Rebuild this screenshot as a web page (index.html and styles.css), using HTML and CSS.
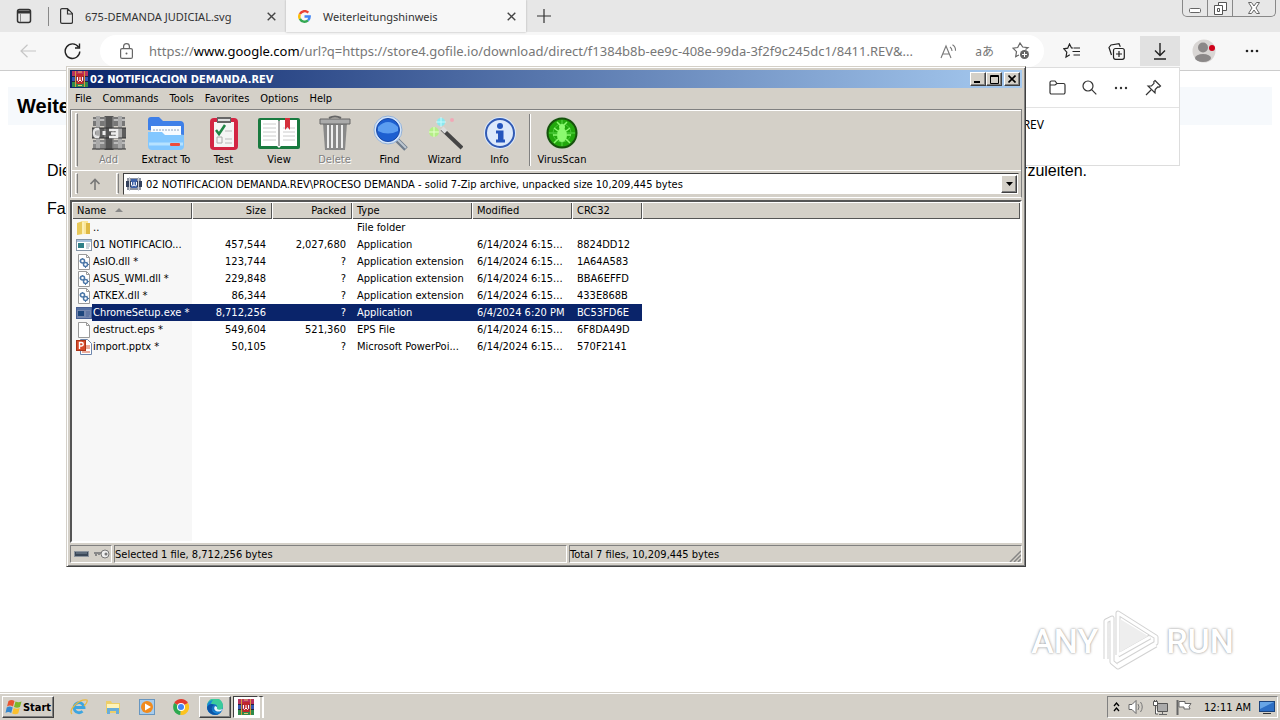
FILE: index.html
```
<!DOCTYPE html>
<html lang="de">
<head>
  <meta charset="UTF-8">
  <title>Weiterleitungshinweis</title>
  <link rel="stylesheet" href="styles.css">
</head>
<body>
  <svg class="defs" width="0" height="0">
    <symbol id="rar" viewBox="0 0 16 16">
      <rect width="16" height="5" fill="#b8315f"/>
      <rect y="5" width="16" height="6" fill="#3656b0"/>
      <rect y="11" width="16" height="5" fill="#2f8a4a"/>
      <path d="M0 5.500h16M0 10.500h16" stroke="#26233f"/>
      <path d="M3.500 0v16M12.500 0v16" stroke="#d8963c"/>
      <rect x="4.500" y="3" width="7" height="10" fill="#c0262c"/>
      <path d="M5.500 6v3.500l1 1 1.500-1.500 1.500 1.500 1-1V6M8 6v3" stroke="#fff" fill="none"/>
      <path d="M6 1h4M6 14.500h4" stroke="#e8c06a"/>
    </symbol>
    <symbol id="archive" viewBox="0 0 16 14">
      <path d="M1 1h14v12H1z" fill="#8d93a0"/>
      <path d="M0 4h16v6H0z" fill="#34415c"/>
      <path d="M3.500 0v14M12.500 0v14" stroke="#c9ced8"/>
      <path d="M5 2h6v9H5z" fill="#3e62a8"/>
      <path d="M5.500 5v3l1 1L8 8l1.500 1 1-1V5M8 5v3" stroke="#fff" fill="none"/>
    </symbol>
    <symbol id="exe" viewBox="0 0 16 14">
      <rect x=".5" y="1.500" width="15" height="11" fill="#fff" stroke="#8494a6"/>
      <path d="M1 2h14v2H1z" fill="#a9c2dc"/>
      <path d="M2 5h6v5H2z" fill="#2f7f87"/>
      <path d="M10 6h4M10 8h4M10 10h3" stroke="#9aa7b5"/>
    </symbol>
    <symbol id="exe-sel" viewBox="0 0 16 14">
      <rect x=".5" y="1.500" width="15" height="11" fill="#7486ae" stroke="#475f94"/>
      <path d="M1 2h14v2H1z" fill="#5470a4"/>
      <path d="M2 5h6v5H2z" fill="#1d467d"/>
      <path d="M10 6h4M10 8h4M10 10h3" stroke="#4e6699"/>
    </symbol>
    <symbol id="dll" viewBox="0 0 16 16">
      <path d="M2.500.5h8l3 3v12h-11z" fill="#fff" stroke="#9a9a9a"/>
      <path d="M10.500.5v3h3" fill="none" stroke="#9a9a9a"/>
      <circle cx="6.500" cy="7" r="2" fill="none" stroke="#4d78a8" stroke-width="1.500"/>
      <circle cx="9.500" cy="10.500" r="2" fill="none" stroke="#4d78a8" stroke-width="1.500"/>
      <path d="M6.500 4v1M3.500 7h1M9.500 13v1M12 10.500h1M4.500 5l1 1M11 8.500l.7-.7" stroke="#4d78a8"/>
    </symbol>
  </svg>

  <div class="tabs">
    <button class="tab-menu" aria-label="Tab actions"><svg width="16" height="16" viewBox="0 0 16 16"><rect x="1.500" y="1.500" width="13" height="13" rx="2" fill="none" stroke="#333" stroke-width="1.500"/><path d="M1 2.500h14v3H1z" fill="#333"/><path d="M4.500 5v9" stroke="#888"/></svg></button>
    <div class="tab">
      <svg width="13" height="16" viewBox="0 0 13 16"><path d="M2 .6h5.500l5 5V14a1.400 1.400 0 0 1-1.400 1.400H2A1.400 1.400 0 0 1 .6 14V2A1.400 1.400 0 0 1 2 .6zM7.500.6V6h5" fill="none" stroke="#333" stroke-width="1.200"/></svg>
      <a href="#">675-DEMANDA JUDICIAL.svg</a>
      <button class="close" aria-label="Close tab"><svg width="9" height="9" viewBox="0 0 9 9"><path d="M.7.7l7.600 7.600M8.300.7L.7 8.300" stroke="#444" stroke-width="1.400"/></svg></button>
    </div>
    <div class="tab active">
      <svg width="13" height="13" viewBox="0 0 24 24" fill="none" stroke-width="4.500"><path d="M19 5A9.600 9.600 0 0 0 3.500 7.500" stroke="#ea4335"/><path d="M3.500 7.500a9.600 9.600 0 0 0 0 9" stroke="#fbbc05"/><path d="M3.500 16.500A9.600 9.600 0 0 0 18.500 19" stroke="#34a853"/><path d="M18.500 19a9.600 9.600 0 0 0 3-7H12" stroke="#4285f4"/></svg>
      <a href="#">Weiterleitungshinweis</a>
      <button class="close" aria-label="Close tab"><svg width="9" height="9" viewBox="0 0 9 9"><path d="M.7.7l7.600 7.600M8.300.7L.7 8.300" stroke="#444" stroke-width="1.400"/></svg></button>
    </div>
    <button class="new-tab" aria-label="New tab"><svg width="14" height="14" viewBox="0 0 14 14"><path d="M7 0v14M0 7h14" stroke="#333" stroke-width="1.200"/></svg></button>
    <div class="win-controls">
      <button aria-label="Minimize"><svg width="12" height="12" viewBox="0 0 12 12"><rect x=".5" y="6.500" width="11" height="4" rx="1" fill="#fff" stroke="#666"/></svg></button>
      <button aria-label="Restore"><svg width="13" height="13" viewBox="0 0 13 13" fill="#fff" stroke="#555"><path d="M4.500.5h8v8h-8z"/><path d="M.5 3.500h8v9h-8zM3.500 6.500h2v3h-2z"/></svg></button>
      <button aria-label="Close"><svg width="12" height="12" viewBox="0 0 12 12"><path d="M.5.500h3L6 4 8.500.5h3L8 6l3.500 5.500h-3L6 8l-2.500 3.500h-3L4 6z" fill="#fff" stroke="#666"/></svg></button>
    </div>
  </div>

  <div class="toolbar">
    <button class="tool" aria-label="Back"><svg width="16" height="14" viewBox="0 0 16 14"><path d="M16 7H1M7.500.7L1 7l6.500 6.300" fill="none" stroke="#c6c6c6" stroke-width="1.200"/></svg></button>
    <button class="tool reload" aria-label="Refresh"><svg width="17" height="17" viewBox="0 0 17 17"><path d="M14.500 4A7.300 7.300 0 1 0 15.800 8.500M15.500.5v4.500h-4.500" fill="none" stroke="#222" stroke-width="1.400"/></svg></button>
    <div class="address">
      <svg width="13" height="16" viewBox="0 0 13 16"><rect x=".6" y="5.600" width="11.800" height="9.800" rx="1.500" fill="none" stroke="#666" stroke-width="1.200"/><path d="M3.600 5.500V3.500a2.900 2.900 0 0 1 5.800 0v2" fill="none" stroke="#666" stroke-width="1.200"/><circle cx="6.500" cy="10.500" r="1" fill="#666"/></svg>
      <a class="url" href="#">https://<b>www.google.com</b>/url?q=https://store4.gofile.io/download/direct/f1384b8b-ee9c-408e-99da-3f2f9c245dc1/8411.REV&amp;...</a>
      <button aria-label="Read aloud"><svg width="17" height="15" viewBox="0 0 17 15" fill="none" stroke="#777" stroke-width="1.100"><path d="M1 14L6 2l5 12M3 10h6M10 3q2 1.500 2 4M12.500.7q3.300 2 3 6"/></svg></button>
      <button class="translate" aria-label="Translate">aあ</button>
      <button aria-label="Add to favorites"><svg width="18" height="18" viewBox="0 0 18 18"><path d="M13.500 7.500l2.500-1.800-5.300-.7L8 1 5.700 5.500 1 6.200l3.500 3.400-.8 5L7 13" fill="none" stroke="#666" stroke-width="1.200"/><circle cx="12.500" cy="12.500" r="4.500" fill="#666"/><path d="M12.500 10v5M10 12.500h5" stroke="#fff"/></svg></button>
    </div>
    <button class="tool" aria-label="Favorites"><svg width="18" height="16" viewBox="0 0 18 16" fill="none" stroke="#222" stroke-width="1.200"><path d="M10.500 5L8.500 5 6.500 1 4.700 5.200.8 5.800l3 3.300-.8 4.900 3.800-2.200M11 5h6M9.500 8.500H17M10.500 12H17"/></svg></button>
    <button class="tool" aria-label="Collections"><svg width="17" height="17" viewBox="0 0 17 17" fill="none" stroke="#222" stroke-width="1.200"><path d="M3.500 12L1 4.500 3 2l8-1.300 1.300 3"/><rect x="5.500" y="5.500" width="10.800" height="10.800" rx="2"/><path d="M11 8v6M8 11h6"/></svg></button>
    <button class="tool pressed" aria-label="Downloads"><svg width="14" height="17" viewBox="0 0 14 17" fill="none" stroke="#222" stroke-width="1.400"><path d="M7 0v12M2 7.500l5 5 5-5M1 16h12"/></svg></button>
    <button class="tool" aria-label="Profile"><svg width="24" height="24" viewBox="0 0 24 24"><circle cx="12" cy="12" r="11.500" fill="#d9d6d4"/><circle cx="11" cy="8.500" r="5" fill="#8b8888"/><ellipse cx="11" cy="19" rx="8" ry="4" fill="#8b8888"/><circle cx="20" cy="9" r="3" fill="#d0021b"/></svg></button>
    <button class="tool more" aria-label="Settings"><svg width="14" height="4" viewBox="0 0 14 4" fill="#222"><circle cx="2" cy="2" r="1.300"/><circle cx="7" cy="2" r="1.300"/><circle cx="12" cy="2" r="1.300"/></svg></button>
  </div>

  <main class="page">
    <h1>Weite</h1>
    <p class="notice"><span>Die</span><span>weiterzuleiten.</span></p>
    <p>Falls</p>
  </main>

  <div class="downloads">
    <div class="downloads-head">
      <button aria-label="Open folder"><svg width="17" height="15" viewBox="0 0 17 15"><path d="M1 12V2.500A1.500 1.500 0 0 1 2.500 1H6l2 2.500h6.500A1.500 1.500 0 0 1 16 5v7.500a1.500 1.500 0 0 1-1.500 1.500h-12A1.500 1.500 0 0 1 1 12.500zM1 5h5l2-1.500" fill="none" stroke="#333" stroke-width="1.200"/></svg></button>
      <button aria-label="Search"><svg width="15" height="15" viewBox="0 0 15 15"><circle cx="6" cy="6" r="5" fill="none" stroke="#333" stroke-width="1.200"/><path d="M9.700 9.700l4.600 4.600" stroke="#333" stroke-width="1.200"/></svg></button>
      <button aria-label="More"><svg width="14" height="4" viewBox="0 0 14 4" fill="#333"><circle cx="2" cy="2" r="1.200"/><circle cx="7" cy="2" r="1.200"/><circle cx="12" cy="2" r="1.200"/></svg></button>
      <button aria-label="Pin"><svg width="17" height="17" viewBox="0 0 17 17"><path d="M10 1.500L15.500 7l-1.300 1.200-1.500-.2-2.500 2.500-.2 3.500L3 7l3.500-.2L9 4.300l-.2-1.600zM6 11l-5 5" fill="none" stroke="#333" stroke-width="1.200"/></svg></button>
    </div>
    <a class="download-name" href="#">8411.REV</a>
  </div>

  <div class="watermark" aria-hidden="true">
    <span>ANY</span>
    <svg width="60" height="64" viewBox="0 0 60 64" fill="none" stroke-linejoin="round">
      <path d="M4 50V12l6-3v44l6 5 38-22M16 46V4l38 24v6L16 56M16 46l32-18" stroke="#d2d2d2" stroke-width="5"/>
      <path d="M4 50V12l6-3v44l6 5 38-22M16 46V4l38 24v6L16 56M16 46l32-18" stroke="#fff" stroke-width="3"/>
      <path d="M18 10l28 17-28 16z" fill="#eee"/>
    </svg>
    <span>RUN</span>
  </div>

  <section class="winrar">
    <header class="titlebar">
      <svg width="16" height="16"><use href="#rar"/></svg>
      <h2>02 NOTIFICACION DEMANDA.REV</h2>
      <button aria-label="Minimize"><svg width="8" height="8" viewBox="0 0 8 8"><path d="M0 7h6" stroke="#000" stroke-width="2"/></svg></button>
      <button aria-label="Maximize"><svg width="9" height="9" viewBox="0 0 9 9"><path d="M.5.500h8v8h-8zM0 1.500h9" stroke="#000" fill="none"/></svg></button>
      <button class="close-win" aria-label="Close"><svg width="8" height="8" viewBox="0 0 8 8"><path d="M.5.500l7 7M7.500.5l-7 7" stroke="#000" stroke-width="1.600"/></svg></button>
    </header>
    <nav class="menu">
      <button>File</button>
      <button>Commands</button>
      <button>Tools</button>
      <button>Favorites</button>
      <button>Options</button>
      <button>Help</button>
    </nav>
    <div class="band actions">
      <i class="grip"></i>
      <button class="action" disabled>
        <svg width="36" height="36" viewBox="0 0 36 36"><path d="M2 2h32v9H2z" fill="#777"/><path d="M1 13h34v10H1z" fill="#5c5c5c"/><path d="M2 25h32v9H2z" fill="#888"/><path d="M2 5h32M2 28h32" stroke="#bbb" stroke-width="2"/><path d="M7 1v34M29 1v34" stroke="#aaa" stroke-width="4"/><path d="M18 1v34" stroke="#555" stroke-width="9"/><path d="M14 2v32M22 2v32" stroke="#999"/><path d="M1 13h34M1 23h34M1 34h34" stroke="#333"/><path d="M8 14H6q-3 0-3 4t3 4h2" stroke="#e4e4e4" stroke-width="2.500" fill="none"/><path d="M13 16v4" stroke="#eee" stroke-width="3"/><path d="M18 15h8v7h-8M20 18.500h5" stroke="#eee" stroke-width="2.500" fill="none"/></svg>
        Add
      </button>
      <button class="action wide">
        <svg width="38" height="36" viewBox="0 0 38 36"><path d="M1 15V5q0-3 3-3h8l4 4h17q4 0 4 4v10z" fill="#3d7fe8"/><path d="M4 11h30v15H4z" fill="#f7fbff"/><path d="M6 15h26" stroke="#c2cfdf" stroke-width="2" stroke-dasharray="2 1"/><path d="M1 17h14l3 3h19v11q0 4-4 4H5q-4 0-4-4z" fill="#82c7ff"/><path d="M2 29h34" stroke="#b6e2ff" stroke-width="3"/><rect x="23" y="28" width="10" height="3" rx="1" fill="#ee4b3a"/></svg>
        Extract To
      </button>
      <button class="action">
        <svg width="30" height="36" viewBox="0 0 30 36"><rect x="1" y="3" width="28" height="32" rx="4" fill="#d32543"/><path d="M5 7h20v25H5z" fill="#f5f5f5"/><path d="M8 2h14v6H8z" fill="#666"/><path d="M9 5h12" stroke="#ddd" stroke-width="2"/><path d="M7 15l3 4 6-9" stroke="#208546" stroke-width="2.500" fill="none"/><path d="M16 16h7M16 24h7M16 28h7" stroke="#bbb"/><path d="M8 22h5v6H8z" fill="none" stroke="#aaa"/></svg>
        Test
      </button>
      <button class="action book">
        <svg width="44" height="36" viewBox="0 0 44 36"><rect x="1" y="3" width="42" height="31" rx="2" fill="#197a3f"/><path d="M4 5h17l1 2 1-2h17v26H24l-2 2-2-2H4z" fill="#fff"/><path d="M22 6v25" stroke="#aaa" stroke-width="2"/><path d="M6 9h13M6 13h13M6 17h13M6 21h13M6 25h13M26 13h12M26 17h12M26 21h12M26 25h12" stroke="#ccc"/><path d="M28 3h5v12l-2.500-3-2.500 3z" fill="#d52f3b"/></svg>
        View
      </button>
      <button class="action" disabled>
        <svg width="32" height="36" viewBox="0 0 32 36"><path d="M4 8h24l-2 27H6z" fill="#898989"/><path d="M9 10v23M13 10v23M18 10v23M23 10v23" stroke="#eee" stroke-width="2"/><path d="M1 4h30v5H1z" fill="#ababab" stroke="#666"/><path d="M10 3q6-3 12 0" stroke="#666" stroke-width="2" fill="none"/></svg>
        Delete
      </button>
      <button class="action">
        <svg width="36" height="36" viewBox="0 0 36 36"><path d="M23 23l11 11" stroke="#6f7c8c" stroke-width="5"/><path d="M24 23l10 10" stroke="#bdc8d2" stroke-width="2"/><circle cx="16" cy="15" r="14" fill="#d4e5fa" stroke="#94b2d8"/><circle cx="16" cy="15" r="11.500" fill="#1d5fd0" stroke="#1947a4"/><path d="M6 12q10-10 20 0v4q-10 5-20 0z" fill="#5b9df0"/></svg>
        Find
      </button>
      <button class="action">
        <svg width="36" height="36" viewBox="0 0 36 36"><path d="M15 14l20 19" stroke="#454545" stroke-width="4"/><path d="M15 13l4 4" stroke="#ddd" stroke-width="4"/><circle cx="7" cy="17" r="5" fill="#b4ef87"/><path d="M7 12v10M2 17h10" stroke="#e8ffd0"/><circle cx="14" cy="7" r="4" fill="#8ae8ef"/><path d="M14 2v10M9 7h10" stroke="#c8fbff"/><circle cx="25" cy="5" r="2" fill="#f1a8b6"/></svg>
        Wizard
      </button>
      <button class="action">
        <svg width="36" height="36" viewBox="0 0 36 36"><circle cx="18" cy="18" r="16" fill="#dceafa"/><circle cx="18" cy="18" r="14" fill="#dce9fb" stroke="#315ab4" stroke-width="2"/><circle cx="18" cy="11" r="3" fill="#2455bd"/><path d="M14 17h6v9h3M14 26h9" stroke="#2455bd" stroke-width="3" fill="none"/><path d="M18.500 17v9" stroke="#2455bd" stroke-width="5"/></svg>
        Info
      </button>
      <i class="divider"></i>
      <button class="action wide">
        <svg width="36" height="36" viewBox="0 0 36 36"><circle cx="18" cy="18" r="16" fill="#c7d2c3"/><circle cx="18" cy="18" r="14.500" fill="#22a80d" stroke="#17510d" stroke-width="2"/><path d="M5 18h26M18 5v26" stroke="#5bd84a"/><circle cx="18" cy="18" r="9" fill="none" stroke="#48c838"/><ellipse cx="18" cy="20" rx="5" ry="7" fill="#8bf96f"/><circle cx="18" cy="12" r="3" fill="#8bf96f"/><path d="M14 16l-4-3M22 16l4-3M13 20H9M23 20h4M14 24l-4 4M22 24l4 4M16 10l-3-3M20 10l3-3" stroke="#8bf96f" stroke-width="1.500"/></svg>
        VirusScan
      </button>
    </div>
    <div class="band location">
      <i class="grip"></i>
      <button class="up" aria-label="Up one level"><svg width="12" height="12" viewBox="0 0 12 12"><path d="M6 12V2M1.500 6L6 1.500 10.500 6" fill="none" stroke="#777" stroke-width="1.600"/></svg></button>
      <i class="grip"></i>
      <div class="combo">
        <svg width="16" height="14"><use href="#archive"/></svg>
        <input type="text" aria-label="Archive path" value="02 NOTIFICACION DEMANDA.REV\PROCESO DEMANDA - solid 7-Zip archive, unpacked size 10,209,445 bytes">
        <button aria-label="Open list"><svg width="7" height="4" viewBox="0 0 7 4"><path d="M0 0h7L3.500 4z"/></svg></button>
      </div>
    </div>
    <div class="list">
      <table>
        <colgroup><col class="c-name"><col class="c-num"><col class="c-num"><col class="c-name"><col class="c-date"><col class="c-crc"><col></colgroup>
        <thead>
          <tr><th>Name <svg class="sort" width="8" height="4" viewBox="0 0 8 4"><path d="M0 4h8L4 0z" fill="#888"/></svg></th><th class="num">Size</th><th class="num">Packed</th><th>Type</th><th>Modified</th><th>CRC32</th><th></th></tr>
        </thead>
        <tbody>
          <tr><td class="name"><svg width="16" height="16" viewBox="0 0 16 16"><path d="M1 3l6-2v13l-6 1z" fill="#e8c95a"/><path d="M6 1h6v13H6z" fill="#fae69b"/><path d="M10 3h4v11h-4z" fill="#dfb944"/><path d="M7 2v12" stroke="#fff8cf"/></svg><span>..</span></td><td></td><td></td><td>File folder</td><td></td><td></td></tr>
          <tr><td class="name"><svg width="16" height="14"><use href="#exe"/></svg><span>01 NOTIFICACIO...</span></td><td class="num">457,544</td><td class="num">2,027,680</td><td>Application</td><td>6/14/2024 6:15...</td><td>8824DD12</td></tr>
          <tr><td class="name"><svg width="16" height="16"><use href="#dll"/></svg><span>AsIO.dll *</span></td><td class="num">123,744</td><td class="num">?</td><td>Application extension</td><td>6/14/2024 6:15...</td><td>1A64A583</td></tr>
          <tr><td class="name"><svg width="16" height="16"><use href="#dll"/></svg><span>ASUS_WMI.dll *</span></td><td class="num">229,848</td><td class="num">?</td><td>Application extension</td><td>6/14/2024 6:15...</td><td>BBA6EFFD</td></tr>
          <tr><td class="name"><svg width="16" height="16"><use href="#dll"/></svg><span>ATKEX.dll *</span></td><td class="num">86,344</td><td class="num">?</td><td>Application extension</td><td>6/14/2024 6:15...</td><td>433E868B</td></tr>
          <tr class="selected"><td class="name"><svg width="16" height="14"><use href="#exe-sel"/></svg><span>ChromeSetup.exe *</span></td><td class="num">8,712,256</td><td class="num">?</td><td>Application</td><td>6/4/2024 6:20 PM</td><td>BC53FD6E</td></tr>
          <tr><td class="name"><svg width="16" height="16" viewBox="0 0 16 16"><path d="M2.500.5h8l3 3v12h-11z" fill="#fff" stroke="#9a9a9a"/><path d="M10.500.5v3h3" fill="none" stroke="#9a9a9a"/></svg><span>destruct.eps *</span></td><td class="num">549,604</td><td class="num">521,360</td><td>EPS File</td><td>6/14/2024 6:15...</td><td>6F8DA49D</td></tr>
          <tr><td class="name"><svg width="16" height="16" viewBox="0 0 16 16"><path d="M4.500.5h7l4 4v11h-11z" fill="#fff" stroke="#6d86ad"/><path d="M10 7h4M10 9h4M6 13h8" stroke="#d85a3b"/><rect x=".5" y="1.500" width="9" height="10" fill="#d6492a" stroke="#a93318"/><path d="M3.500 10V3.500h2a1.700 1.700 0 0 1 0 3.500h-2" fill="none" stroke="#fff" stroke-width="1.400"/></svg><span>import.pptx *</span></td><td class="num">50,105</td><td class="num">?</td><td>Microsoft PowerPoi...</td><td>6/14/2024 6:15...</td><td>570F2141</td></tr>
        </tbody>
      </table>
    </div>
    <footer class="status">
      <div class="status-icons">
        <svg width="16" height="8" viewBox="0 0 16 8"><rect x=".5" y="1.500" width="14" height="5" fill="#3b4858" stroke="#8c949e"/><path d="M2 3h11" stroke="#7e8c9c"/></svg>
        <svg width="17" height="10" viewBox="0 0 17 10"><path d="M1 4h9M3 4v3M6 4v2" stroke="#888" stroke-width="2"/><circle cx="12" cy="5" r="4" fill="#eee" stroke="#777"/><circle cx="13" cy="5" r="1.500" fill="#777"/></svg>
      </div>
      <div class="status-cell">Selected 1 file, 8,712,256 bytes</div>
      <div class="status-cell total">Total 7 files, 10,209,445 bytes<svg width="12" height="12" viewBox="0 0 12 12"><path d="M1 12L12 1M5 12l7-7M9 12l3-3" stroke="#858585" stroke-width="1.500"/></svg></div>
    </footer>
  </section>

  <div class="taskbar">
    <button class="start"><svg width="18" height="16" viewBox="0 0 17 16"><path d="M3 2q3-2 6 0L7.500 7.500q-3-2-6 0z" fill="#e8542f"/><path d="M10 2.500q3 1.500 6 0L14.500 8q-3 1.500-6 0z" fill="#7db728"/><path d="M1.200 8.500q3-2 6 0L5.700 14q-3-2-5.700 0z" fill="#3588cf"/><path d="M8.200 9q3 1.500 6 0l-1.500 5.500q-3 1.500-6 0z" fill="#fbc02d"/></svg>Start</button>
    <button class="task" aria-label="Internet Explorer"><svg width="18" height="18" viewBox="0 0 18 18"><path d="M4 9.500h10a5 5 0 1 0-1.500 3.800" fill="none" stroke="#3da5e0" stroke-width="2.800"/><path d="M2 16Q-1 13 5 7T17 2q1 2-3 6" fill="none" stroke="#ebb93d" stroke-width="1.200"/></svg></button>
    <button class="task" aria-label="Explorer"><svg width="16" height="16" viewBox="0 0 16 16"><path d="M1 2h5l1 2h8v10H1z" fill="#edce69"/><path d="M2 5h12v5H2z" fill="#fff3b8"/><path d="M2 15V9h12v6h-3v-3H5v3z" fill="#69add9"/></svg></button>
    <button class="task" aria-label="Media Player"><svg width="16" height="16" viewBox="0 0 16 16"><rect x=".5" y=".5" width="15" height="15" fill="#a8ccec" stroke="#6796c0"/><circle cx="8" cy="8" r="6" fill="#f18b1e"/><path d="M6 4.500v7L12 8z" fill="#fff"/></svg></button>
    <button class="task" aria-label="Chrome"><svg width="16" height="16" viewBox="0 0 16 16"><path d="M8 8L1.200 4A8 8 0 0 1 15 4z" fill="#e33b2e"/><path d="M8 8L1.200 4A8 8 0 0 0 7.500 16z" fill="#2da94f"/><path d="M8 8l7-4a8 8 0 0 1-7.500 12z" fill="#fcc31e"/><circle cx="8" cy="8" r="4" fill="#fff"/><circle cx="8" cy="8" r="3" fill="#4285f4"/></svg></button>
    <button class="task open" aria-label="Edge"><svg width="17" height="16" viewBox="0 0 17 16"><circle cx="8" cy="8" r="8" fill="#1671c3"/><path d="M0 7A8 8 0 0 1 16 7q0 4-4 4-3 0-2-2 1-4-4-4-5 0-6 4z" fill="#3acb9b"/><path d="M0 8q0-6 6-7-3 3-2 7 1 6 10 5A8 8 0 0 1 0 8z" fill="#1887d8"/><path d="M0 8q3-5 7-2-4 2-1 7 3 3 7 1A8 8 0 0 1 0 8z" fill="#0c54a5"/><path d="M8 7q-2 3 1 5 2 1 5 0l2-2q-7 2-6-2z" fill="#e7f8ff"/></svg></button>
    <button class="task current" aria-label="WinRAR"><svg width="16" height="16"><use href="#rar"/></svg></button>
    <i class="stack"></i>
    <div class="tray">
      <svg width="7" height="10" viewBox="0 0 7 10"><path d="M1 4l2.500-3L6 4M1 9l2.500-3L6 9" fill="none" stroke="#000" stroke-width="1.300"/></svg>
      <svg width="16" height="14" viewBox="0 0 16 14"><path d="M1 4.500h3l4-4v13l-4-4H1z" fill="#fff" stroke="#666"/><path d="M10 4q2 3 0 6M12.500 2q3.500 5 0 10" fill="none" stroke="#777"/></svg>
      <svg width="16" height="15" viewBox="0 0 16 15"><path d="M5.500 3.500h10v8h-10z" fill="#aaa" stroke="#555"/><path d="M7 14.500h8M10.500 12v2" stroke="#666"/><path d="M1.500 1.500h4v4h-4zM3.500 6v8H6M2.500 0v2M4.500 0v2" fill="#fff" stroke="#555"/></svg>
      <svg width="16" height="15" viewBox="0 0 16 15"><path d="M1.500 0v15" stroke="#666" stroke-width="2"/><path d="M3 1.500h6v2h6l-2 3 1 2.500H8V7H3z" fill="#fff" stroke="#666"/></svg>
      <time>12:11 AM</time>
      <svg width="16" height="13" viewBox="0 0 16 13"><rect x=".5" y=".5" width="15" height="10" fill="#2d6fc5" stroke="#1b437c"/><path d="M1 1h14L1 8z" fill="#67a5e6"/><path d="M4 12.500h8" stroke="#333"/></svg>
    </div>
  </div>
</body>
</html>
```
FILE: styles.css
```
* {
  box-sizing: border-box;
}
body {
  margin: 0;
  height: 100vh;
  overflow: hidden;
  display: flex;
  flex-direction: column;
  background: #fff;
  color: #000;
  font: 11px/17px "DejaVu Sans Condensed", Tahoma, sans-serif;
}
button {
  border: 0;
  padding: 0;
  background: none;
  color: inherit;
  font: inherit;
  display: flex;
  align-items: center;
  justify-content: center;
}
svg {
  flex: none;
  display: block;
}
a {
  color: inherit;
  text-decoration: none;
}
.defs {
  position: absolute;
}

/* browser */
.tabs,
.toolbar {
  display: flex;
  flex: none;
  font-family: "Noto Sans", "Noto Sans CJK JP", sans-serif;
}
.tabs {
  height: 32px;
  background: #e7e7e7;
  font-size: 11px;
  color: #333;
}
.tab-menu {
  width: 48px;
}
.tab {
  width: 238px;
  display: flex;
  align-items: center;
  gap: 12px;
  padding: 0 10px 0 12px;
  position: relative;
}
.tab:not(.active)::before {
  content: "";
  position: absolute;
  left: 0;
  top: 7px;
  height: 19px;
  border-left: 1px solid #888;
}
.tab.active {
  width: 240px;
  background: #f7f7f7;
  box-shadow: 0 0 2px #aaa;
}
.tab a {
  flex: 1;
}
.new-tab {
  width: 36px;
}
.win-controls {
  display: flex;
  height: 17px;
  margin: 0 4px 0 auto;
  border: 1px solid #888;
  border-top: 0;
  border-radius: 0 0 5px 5px;
}
.win-controls button {
  width: 25px;
  border-right: 1px solid #888;
}
.win-controls button:last-child {
  width: 42px;
  border: 0;
}
.toolbar {
  height: 39px;
  align-items: center;
  background: #f7f7f7;
  border-bottom: 1px solid #ccc;
  padding: 0 8px;
}
.tool {
  width: 40px;
  height: 30px;
  margin-right: 4px;
}
.toolbar .reload {
  margin-right: 8px;
}
.tool.pressed {
  background: #e1e1e1;
}
.toolbar .more {
  width: 40px;
  margin: 0 0 0 4px;
}
.address {
  flex: 1;
  min-width: 0;
  height: 32px;
  display: flex;
  align-items: center;
  gap: 18px;
  padding: 0 14px 0 20px;
  margin-right: 8px;
  border-radius: 16px;
  background: #fff;
  color: #777;
}
.url {
  flex: 1;
  min-width: 0;
  margin-left: -2px;
  overflow: hidden;
  white-space: nowrap;
  font-size: 13px;
}
.url b {
  font-weight: 400;
  color: #000;
}
.translate {
  font-size: 12px;
}

/* redirect notice */
.page {
  flex: 1;
  padding: 16px 8px;
  font: 16px/18px "Liberation Sans", Arial, sans-serif;
}
.page h1 {
  margin: 0 0 37px;
  padding: 0 9px;
  background: #f6f9fc;
  font-size: 20px;
  line-height: 38px;
}
.page p {
  margin: 0 39px 20px;
}
.page .notice {
  display: flex;
  justify-content: space-between;
  margin-right: 185px;
}
.downloads {
  position: absolute;
  top: 67px;
  right: 100px;
  width: 360px;
  height: 99px;
  background: #fff;
  border: 1px solid #ddd;
}
.downloads-head {
  height: 40px;
  display: flex;
  justify-content: flex-end;
  align-items: center;
  padding-right: 10px;
  border-bottom: 1px solid #e3e3e3;
}
.downloads-head button {
  width: 32px;
}
.download-name {
  display: block;
  padding: 8px 135px 0 0;
  text-align: right;
  font: 12px/17px "Noto Sans", sans-serif;
}
.watermark {
  position: absolute;
  right: 46px;
  bottom: 47px;
  display: flex;
  align-items: center;
  gap: 4px;
  color: #fff;
  font: 500 34px/64px Roboto, sans-serif;
  text-shadow: 0 0 3px #999, 0 0 1px #bbb;
}

/* archive window */
.winrar {
  position: absolute;
  left: 66px;
  top: 66px;
  width: 75vw;
  height: 501px;
  display: flex;
  flex-direction: column;
  padding: 3px;
  background: #d4d0c8;
  border: 1px solid #d4d0c8;
  border-right-color: #404040;
  border-bottom-color: #404040;
  box-shadow: inset 1px 1px #fff, inset -1px -1px #808080;
}
.titlebar {
  height: 18px;
  flex: none;
  display: flex;
  align-items: center;
  padding: 0 2px;
  background: linear-gradient(90deg, #0a246a, #a6caf0);
  color: #fff;
}
.titlebar h2 {
  flex: 1;
  margin: 0 0 0 2px;
  font-size: 11px;
}
.titlebar button,
.combo button,
.start,
.task.open {
  background: #d4d0c8;
  border: 1px solid #fff;
  border-right-color: #404040;
  border-bottom-color: #404040;
  box-shadow: inset -1px -1px #808080;
}
.titlebar button {
  width: 16px;
  height: 14px;
}
.titlebar .close-win {
  margin-left: 2px;
}
.menu {
  height: 20px;
  flex: none;
  display: flex;
  align-items: center;
  gap: 11px;
  padding-left: 5px;
}
.band {
  flex: none;
  display: flex;
  border: 1px solid #808080;
  border-bottom-color: #fff;
  box-shadow: inset 1px 1px #fff;
}
.grip {
  width: 3px;
  margin: 3px 0 3px 4px;
  border: 1px solid #fff;
  border-right-color: #808080;
}
.actions {
  height: 61px;
  margin-top: 1px;
  border-bottom: 0;
  padding-right: 4px;
}
.action {
  width: 55px;
  flex-direction: column;
  justify-content: flex-start;
  padding-top: 5px;
  white-space: nowrap;
}
.action:first-of-type {
  margin-left: 3px;
}
.action.wide {
  width: 60px;
}
.action.book {
  width: 56px;
}
.action:disabled {
  color: #808080;
  text-shadow: 1px 1px #fff;
}
.divider {
  margin: 4px 1px 4px 2px;
  width: 2px;
  border-left: 1px solid #808080;
  border-right: 1px solid #fff;
}
.location {
  height: 28px;
  border-top: 0;
  padding-right: 2px;
}
.up {
  width: 34px;
}
.combo {
  flex: 1;
  display: flex;
  align-items: center;
  height: 22px;
  margin: 3px 0 0 4px;
  padding: 0 1px 0 2px;
  background: #fff;
  border: 1px solid #d4d0c8;
  border-top-color: #404040;
  border-left-color: #404040;
}
.combo input {
  flex: 1;
  border: 0;
  padding: 0 4px;
  font: inherit;
}
.combo button {
  width: 16px;
  height: 18px;
}
.list {
  flex: 1;
  margin-top: 2px;
  border: 2px solid #fff;
  border-top-color: #555;
  border-left-color: #555;
  background: linear-gradient(#f7f7f7, #f7f7f7) 0 0 / 120px 100% no-repeat #fff;
}
table {
  width: 100%;
  table-layout: fixed;
  border-collapse: collapse;
}
.c-name {
  width: 120px;
}
.c-num {
  width: 80px;
}
.c-date {
  width: 100px;
}
.c-crc {
  width: 70px;
}
th,
td {
  height: 17px;
  padding: 1px 0 0 5px;
  line-height: 16px;
  text-align: left;
  font-weight: 400;
  white-space: nowrap;
}
th {
  background: #d4d0c8;
  box-shadow: inset 1px 1px #fff, inset -1px -1px #555;
}
th.num,
td.num {
  text-align: right;
  padding-right: 6px;
}
.sort {
  display: inline-block;
  margin: 0 0 2px 6px;
}
td.name {
  display: flex;
  align-items: center;
  padding: 0 0 0 4px;
}
td.name span {
  flex: 1;
  padding: 1px 0 0 1px;
}
.selected td:not(.name),
.selected span {
  background: #0a246a;
  color: #fff;
}
.status {
  flex: none;
  display: flex;
  gap: 2px;
  height: 20px;
  padding-top: 2px;
}
.status-icons,
.status-cell {
  display: flex;
  align-items: center;
  border: 1px solid #fff;
  border-top-color: #808080;
  border-left-color: #808080;
}
.status-icons {
  width: 42px;
  gap: 3px;
  padding-left: 3px;
}
.status-cell {
  flex: 1;
}
.status-cell.total {
  justify-content: space-between;
}
.status-cell svg {
  align-self: flex-end;
}

/* taskbar */
.taskbar {
  height: 28px;
  flex: none;
  display: flex;
  align-items: center;
  padding: 1px 2px 0 2px;
  background: #d4d0c8;
  border-top: 1px solid #d4d0c8;
  box-shadow: inset 0 1px #fff;
}
.start {
  width: 52px;
  height: 22px;
  margin-right: 8px;
  font-weight: 700;
}
.task {
  width: 34px;
  height: 22px;
}
.task.open {
  width: 32px;
  margin-left: 1px;
}
.task.current {
  width: 25px;
  margin-left: 2px;
  background: #fff;
  border: 1px solid #404040;
  border-right-color: #fff;
  border-bottom-color: #fff;
}
.stack {
  width: 6px;
  height: 22px;
  border: 2px solid #fff;
  border-top: 1px dashed #404040;
  border-bottom: 0;
}
.tray {
  margin-left: auto;
  height: 22px;
  display: flex;
  align-items: center;
  gap: 8px;
  padding: 0 2px 0 5px;
  border: 1px solid #fff;
  border-top-color: #808080;
  border-left-color: #808080;
}
.tray time {
  margin-left: 4px;
}
```
